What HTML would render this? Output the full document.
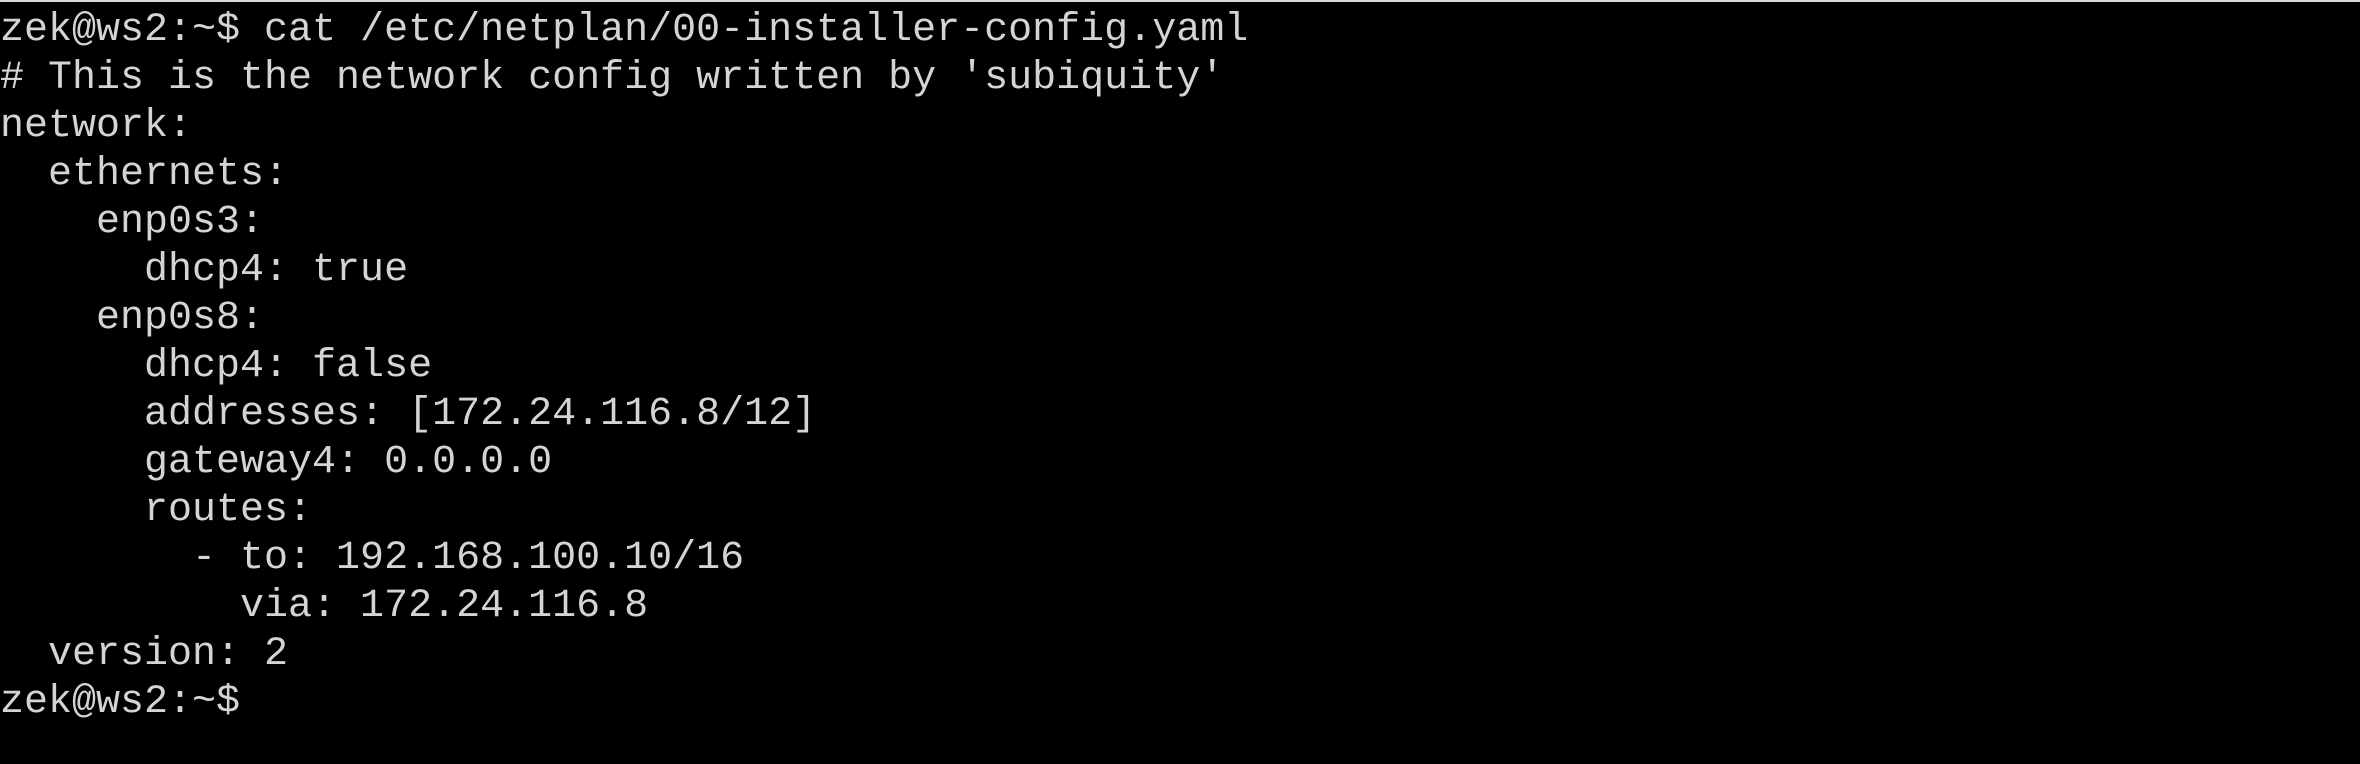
<!DOCTYPE html>
<html><head><meta charset="utf-8"><style>
html,body{margin:0;padding:0;background:#000;}
body{width:2360px;height:764px;overflow:hidden;position:relative;}
.top{position:absolute;left:0;top:0;width:2360px;height:2px;background:#dcdcdc;}
pre{position:absolute;left:0;top:7px;margin:0;font-family:"Liberation Mono",monospace;font-size:40px;line-height:48px;color:#d4d4d4;letter-spacing:0;}
</style></head><body><div class="top"></div><pre>zek@ws2:~$ cat /etc/netplan/00-installer-config.yaml
# This is the network config written by 'subiquity'
network:
  ethernets:
    enp0s3:
      dhcp4: true
    enp0s8:
      dhcp4: false
      addresses: [172.24.116.8/12]
      gateway4: 0.0.0.0
      routes:
        - to: 192.168.100.10/16
          via: 172.24.116.8
  version: 2
zek@ws2:~$</pre></body></html>
